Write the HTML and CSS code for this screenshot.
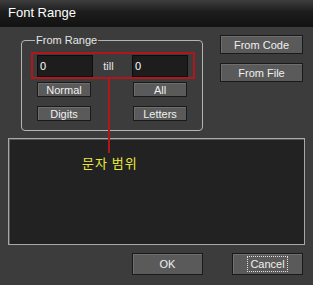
FILE: index.html
```html
<!DOCTYPE html>
<html lang="en">
  <head>
    <meta charset="utf-8">
    <title>Font Range</title>
    <link rel="stylesheet" href="styles.css">
  </head>
  <body>
    <div class="dialog">
      <div class="title-bar">Font Range</div>
      <div class="top">
        <fieldset class="range-group">
          <legend>From Range</legend>
          <div class="range-row">
            <input class="field" type="text" value="0">
            <span class="till">till</span>
            <input class="field" type="text" value="0">
          </div>
          <div class="preset-grid">
            <button class="btn small">Normal</button>
            <button class="btn small">All</button>
            <button class="btn small">Digits</button>
            <button class="btn small">Letters</button>
          </div>
        </fieldset>
        <div class="side-buttons">
          <button class="btn side">From Code</button>
          <button class="btn side">From File</button>
        </div>
      </div>
      <div class="preview">
        <span class="label">문자 범위</span>
      </div>
      <div class="footer">
        <button class="btn wide">OK</button>
        <button class="btn wide"><span class="focus">Cancel</span></button>
      </div>
      <div class="pointer"></div>
    </div>
  </body>
</html>
```
FILE: styles.css
```css
* {
  box-sizing: border-box;
}
body {
  margin: 0;
  background: #3c3c3c;
  font-family: "Liberation Sans", Arial, sans-serif;
  color: #e6e6e6;
}
.dialog {
  position: relative;
  width: 313px;
  height: 285px;
  background: #3c3c3c;
}
.title-bar {
  height: 27px;
  padding: 5px 0 0 8px;
  font-size: 13px;
  color: #ffffff;
  background: linear-gradient(to bottom, #3e3e3e, #1c1c1c 45%, #121212);
}

.top {
  display: flex;
  padding: 7px 0 0 21px;
}
.range-group {
  width: 182px;
  height: 97px;
  margin: 0;
  padding: 0 0 0 9px;
  border: 1px solid #b4b4b4;
  border-radius: 4px;
}
.range-group legend {
  padding: 0 1px;
  margin-left: 4px;
  font-size: 11px;
  color: #e6e6e6;
}
.range-row {
  display: flex;
  align-items: center;
  width: 164px;
  height: 27px;
  margin-top: 6px;
  padding: 0 5px 0 4px;
  border: 2px solid #b0161c;
}
.field {
  width: 56px;
  height: 22px;
  padding: 0 2px;
  border: 1px solid #0e0e0e;
  background: #1d1d1d;
  color: #ffffff;
  font-family: inherit;
  font-size: 11px;
  outline: none;
}
.till {
  flex: 1;
  text-align: center;
  font-size: 11px;
  padding-right: 8px;
}
.preset-grid {
  display: grid;
  grid-template-columns: 54px 54px;
  justify-content: space-between;
  row-gap: 9px;
  width: 150px;
  margin: 3px 0 0 6px;
}

.btn {
  margin: 0;
  padding: 0;
  border: 1px solid #1a1a1a;
  background: #5a5a5a;
  box-shadow: inset 1px 1px 0 #6e6e6e;
  color: #f0f0f0;
  font-family: "Liberation Sans", Arial, sans-serif;
  font-size: 11px;
}
.btn.small {
  height: 15px;
  line-height: 12px;
}
.side-buttons {
  display: flex;
  flex-direction: column;
  gap: 9px;
  margin-left: 17px;
  padding-top: 1px;
}
.btn.side {
  width: 83px;
  height: 19px;
}

.preview {
  height: 107px;
  margin: 7px 8px 0 8px;
  padding: 14px 0 0 73px;
  border: 1px solid #a8a8a8;
  box-shadow: inset 1px 1px 0 #555;
  background: #222222;
}
.label {
  font-family: "Noto Sans CJK KR", sans-serif;
  font-size: 13px;
  color: #e8e83a;
  letter-spacing: 1px;
}

.footer {
  display: flex;
  justify-content: flex-end;
  gap: 29px;
  padding: 8px 10px 0 0;
}
.btn.wide {
  width: 71px;
  height: 22px;
}
.focus {
  padding: 0 1px;
  outline: 1px dotted #e0e0e0;
  outline-offset: 1px;
}

/* annotation line from the range box down to the label */
.pointer {
  position: absolute;
  left: 108px;
  top: 79px;
  width: 2px;
  height: 74px;
  background: #b0161c;
}
```
